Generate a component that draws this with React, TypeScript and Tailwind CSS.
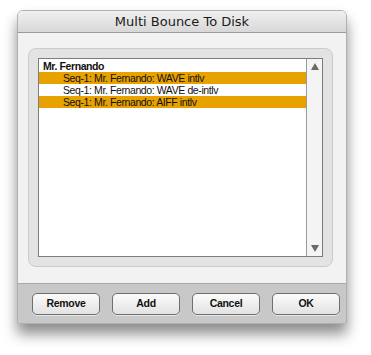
import React from "react";

const rows = [
  { label: "Seq-1: Mr. Fernando: WAVE intlv", selected: true },
  { label: "Seq-1: Mr. Fernando: WAVE de-intlv", selected: false },
  { label: "Seq-1: Mr. Fernando: AIFF intlv", selected: true },
];

const DialogButton = ({ label }: { label: string }) => (
  <button className="h-[22px] w-[68px] rounded-[5px] border border-[#6e6e6e] bg-gradient-to-b from-[#fbfbfb] to-[#e2e2e2] font-['Liberation_Sans',sans-serif] text-[10.5px] font-bold tracking-[-0.3px] text-[#111] shadow-[0_1px_0_rgba(255,255,255,0.6)]">
    {label}
  </button>
);

export default function App() {
  return (
    <div
      className="h-[355px] w-[371px] bg-white pl-[17px] pt-[10px]"
      style={{ fontFamily: '"DejaVu Sans", "Liberation Sans", sans-serif' }}
    >
      <div className="flex w-[330px] flex-col overflow-hidden rounded-t-[6px] border border-[#b0b0b0] shadow-[0_10px_14px_rgba(0,0,0,0.45)]">
        <div className="flex h-[22px] items-center justify-center border-b border-[#9a9a9a] bg-gradient-to-b from-[#f0f0f0] to-[#d8d8d8] text-[13px] text-[#1a1a1a]">
          Multi Bounce To Disk
        </div>
        <div className="bg-[#f2f2f2] pb-[16px] pl-[10px] pr-[13px] pt-[15px]">
          <div className="h-[219px] rounded-[8px] border border-[#cbcbcb] bg-[#e3e3e3] p-[9px]">
            <div className="flex h-[199px] border border-[#7c7c7c] bg-white">
              <div className="flex-1 font-['Liberation_Sans',sans-serif] text-[10.5px] leading-[12px] tracking-[-0.4px] text-[#111]">
                <div className="pl-[4px] pt-[1px] font-bold">Mr. Fernando</div>
                {rows.map((r) => (
                  <div
                    key={r.label}
                    className={`h-[12px] pl-[24px] ${r.selected ? "bg-[#e8a200]" : "bg-white"}`}
                  >
                    {r.label}
                  </div>
                ))}
              </div>
              <div className="flex w-[16px] flex-col items-center justify-between border-l border-[#9a9a9a] bg-[#f4f4f4] py-[4px]">
                <svg width="8" height="7" viewBox="0 0 8 7">
                  <path d="M4 0 L8 7 L0 7 Z" fill="#6a6a6a" />
                </svg>
                <svg width="8" height="7" viewBox="0 0 8 7">
                  <path d="M0 0 L8 0 L4 7 Z" fill="#6a6a6a" />
                </svg>
              </div>
            </div>
          </div>
        </div>
        <div className="flex h-[40px] items-center gap-[12px] border-t border-[#a8a8a8] bg-[#c8c8c8] pl-[14px]">
          <DialogButton label="Remove" />
          <DialogButton label="Add" />
          <DialogButton label="Cancel" />
          <DialogButton label="OK" />
        </div>
      </div>
    </div>
  );
}
